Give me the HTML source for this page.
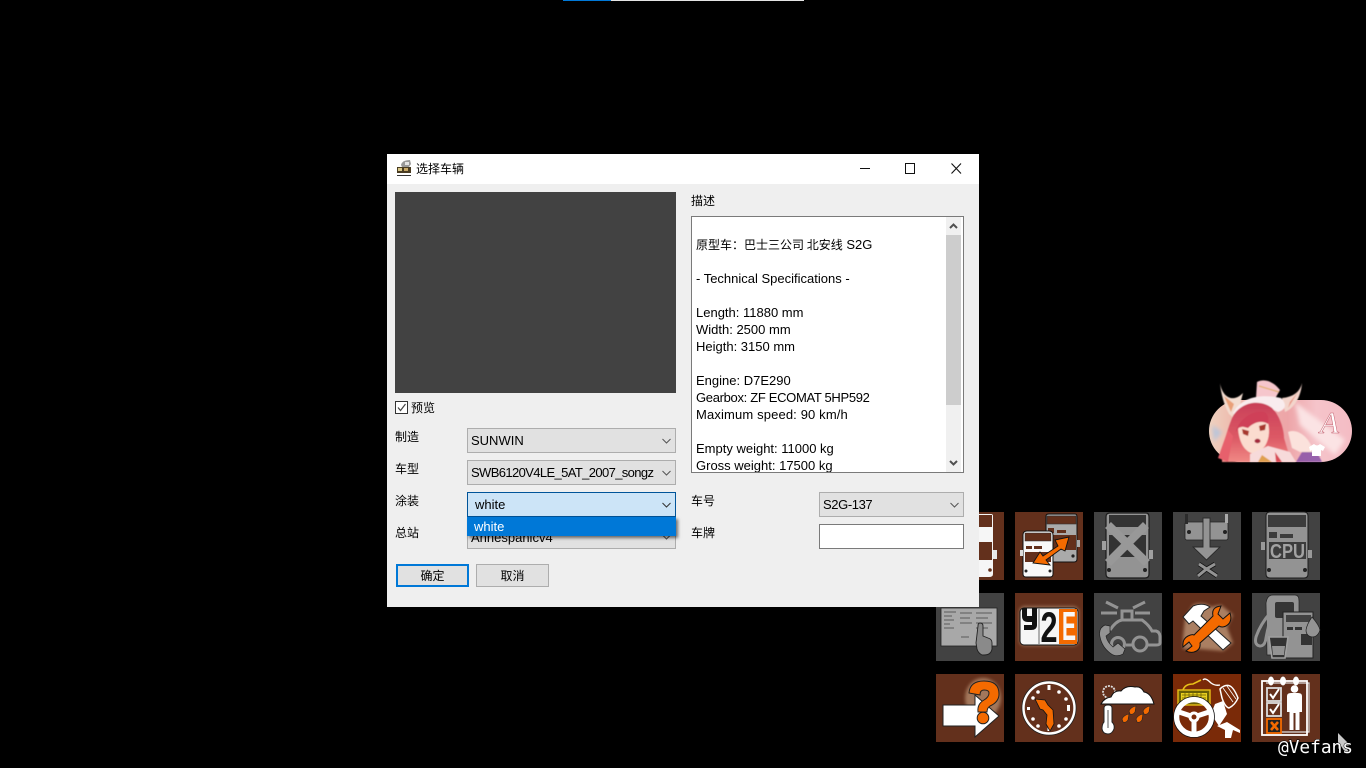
<!DOCTYPE html>
<html lang="zh"><head><meta charset="utf-8"><title>选择车辆</title>
<style>
html,body{margin:0;padding:0;background:#000;width:1366px;height:768px;overflow:hidden}
body{position:relative;font-family:"Liberation Sans","Noto Sans CJK SC",sans-serif;font-size:13px;color:#000}
.a{position:absolute;box-sizing:border-box}
.t{position:absolute;white-space:nowrap;line-height:17px;height:17px}
.c{font-family:"Noto Sans CJK SC","Liberation Sans",sans-serif;font-size:12px}
.combo{position:absolute;box-sizing:border-box;background:#e1e1e1;border:1px solid #adadad;height:25px;line-height:23px;padding-left:3px;white-space:nowrap;overflow:hidden}
.combo svg{position:absolute;right:4px;top:9px}
.btn{position:absolute;box-sizing:border-box;background:#e1e1e1;border:1px solid #adadad;text-align:center;font-family:"Noto Sans CJK SC",sans-serif;font-size:12px;height:23px;line-height:21px;width:73px;top:564px}
</style></head><body>
<div class="a" style="left:563px;top:0;width:48px;height:1px;background:#0078d7"></div>
<div class="a" style="left:611px;top:0;width:193px;height:1px;background:#e4e4e4"></div>

<svg class="a" style="left:0;top:0" width="1366" height="768" viewBox="0 0 1366 768" font-family="Liberation Sans,sans-serif">
<defs>
<linearGradient id="pill" x1="0" x2="1" y1="0" y2="0"><stop offset="0" stop-color="#efd2c0"/><stop offset=".15" stop-color="#eebdb0"/><stop offset=".55" stop-color="#eda5a8"/><stop offset=".75" stop-color="#f5c4ca"/><stop offset="1" stop-color="#f4bcc4"/></linearGradient>
<linearGradient id="hair" x1="0" x2="0" y1="0" y2="1"><stop offset="0" stop-color="#c93f58"/><stop offset=".6" stop-color="#dd5a66"/><stop offset="1" stop-color="#f08a85"/></linearGradient>
<linearGradient id="busg" x1="0" x2="1" y1="0" y2="0"><stop offset="0" stop-color="#c8c8c8"/><stop offset=".3" stop-color="#f6f6f6"/><stop offset="1" stop-color="#f6f6f6"/></linearGradient>
<filter id="b1"><feGaussianBlur stdDeviation="0.6"/></filter>
<filter id="b2"><feGaussianBlur stdDeviation="2"/></filter>
<filter id="g1" x="-30%" y="-30%" width="160%" height="160%"><feGaussianBlur stdDeviation="1.6"/></filter>
</defs>

<!-- avatar -->
<g>
<rect x="1209" y="400" width="143" height="62" rx="31" fill="url(#pill)"/>
<g filter="url(#b2)"><path d="M1295 402L1345 440L1335 455L1300 425Z" fill="#fbe3e4"/><path d="M1212 425L1222 432L1214 442Z" fill="#b9c5da"/></g>
<g filter="url(#b1)">
<path d="M1220 383C1222 396 1232 404 1243 393L1236 420L1229 414C1224 405 1221 394 1220 383Z" fill="#f3ddd0"/>
<path d="M1224 396L1234 404L1231 412Z" fill="#e9a078"/>
<path d="M1302 383C1300 392 1293 397 1282 398L1285 412C1295 408 1301 396 1302 383Z" fill="#f3d5cc"/>
<path d="M1290 402L1298 392L1288 408Z" fill="#e8907e"/>
<path d="M1257 382C1265 378 1274 382 1280 390L1276 397C1270 402 1262 402 1256 398Z" fill="#f6c6cc"/>
<path d="M1259 386L1279 392" stroke="#e2b06a" stroke-width="1.2"/>
<path d="M1233 413C1242 396 1262 394 1281 398C1287 404 1286 410 1278 412C1262 404 1246 406 1238 420Z" fill="#f9ecee"/>
<path d="M1233 416C1243 400 1262 400 1272 408C1280 416 1284 430 1284 438L1290 458L1270 462L1262 462L1236 462L1222 462C1222 450 1226 432 1233 416Z" fill="url(#hair)"/>
<path d="M1238 428C1246 426 1258 421 1267 419C1270 428 1270 438 1265 446C1261 451 1256 454 1251 453C1244 450 1239 442 1238 428Z" fill="#fbdccf"/>
<path d="M1236 432C1238 420 1252 410 1264 412C1268 414 1269 418 1268 424C1262 420 1254 422 1248 428L1240 426Z" fill="#cf3f58"/>
<path d="M1242 429L1249 431L1248 436L1243 434Z" fill="#a8382e"/><path d="M1259 426L1266 424L1265 430L1260 431Z" fill="#a8382e"/>
<ellipse cx="1257.500" cy="441" rx="3" ry="2.200" fill="#a42a3c"/>
<path d="M1250 454L1268 446L1290 452L1296 462L1250 462Z" fill="#f7dada"/>
<path d="M1262 455L1272 462H1258Z" fill="#e0a050"/><path d="M1275 452L1282 462H1276Z" fill="#d84a55"/>
<path d="M1296 462L1302 452L1316 450L1322 462Z" fill="#7f4aa5" opacity=".8"/>
<path d="M1288 432C1296 428 1310 436 1313 452L1300 452L1292 448Z" fill="#fbe2dc"/>
<path d="M1228 430L1233 436L1228 462L1218 458Z" fill="#e7606c"/>
</g>
<text x="1320" y="433" font-family="Liberation Serif,serif" font-style="italic" font-size="31" fill="#fff" stroke="#c4606e" stroke-width=".5">A</text>
<path d="M1309 447L1314 444Q1317 447 1320 444L1325 447L1323 451L1321 450V456H1312V450L1310 451Z" fill="#fff"/>
</g>

<!-- Row 1 -->
<g transform="translate(936,512)"><rect width="68" height="68" fill="#63301c"/>
<path d="M20 2H55Q57 2 57 4V62Q57 65 53 65H20Z" fill="url(#busg)"/><rect x="43" y="3" width="13" height="12" fill="#63301c"/><rect x="43" y="30" width="13" height="18" fill="#63301c"/><rect x="57" y="38" width="4" height="9" fill="#e8e8e8"/><circle cx="54" cy="58" r="1.800" fill="#63301c"/></g>

<g transform="translate(1015,512)"><rect width="68" height="68" fill="#63301c"/>
<path d="M31 4Q31 2 34 2H60Q62 2 62 5V47Q62 50 59 50H31Z" fill="#aaa" stroke="#111"/>
<rect x="32" y="4" width="29" height="8" fill="#63301c" stroke="#333" stroke-width=".6"/><rect x="33" y="16" width="6" height="5" fill="#63301c"/><rect x="42" y="18" width="9" height="3" fill="#63301c"/><rect x="32" y="23" width="29" height="15" fill="#63301c"/><circle cx="58" cy="44" r="1.600" fill="#222"/>
<rect x="62" y="28" width="3" height="7" fill="#aaa"/>
<path d="M8 23Q8 19 12 19H34Q38 19 38 23V62Q38 65 35 65H11Q8 65 8 62Z" fill="#f8f8f8" stroke="#111"/>
<rect x="10" y="21" width="26" height="8" fill="#63301c" stroke="#333" stroke-width=".5"/><rect x="11" y="34" width="6" height="3" fill="#63301c"/><rect x="19" y="34" width="8" height="3" fill="#63301c"/><rect x="10" y="40" width="26" height="10" fill="#63301c"/><rect x="5" y="38" width="3" height="6" fill="#ddd"/><circle cx="11" cy="59" r="1.500" fill="#222"/><circle cx="35" cy="59" r="1.500" fill="#222"/>
<path d="M18 51L25 40L28 44L43 34L40 28L54 25L50 39L46 37L31 48L35 53Z" fill="#f46a00" stroke="#111" stroke-width=".9"/></g>

<g transform="translate(1094,512)"><rect width="68" height="68" fill="#424242"/>
<path d="M12 5Q12 1 16 1H52Q55 1 55 5V62Q55 66 51 66H16Q12 66 12 62Z" fill="#939393" stroke="#1c1c1c" stroke-width="1.200"/>
<rect x="15" y="3" width="37" height="12" fill="#333"/><rect x="15" y="23" width="37" height="22" fill="#333"/><rect x="8" y="29" width="4" height="9" fill="#a0a0a0"/><rect x="55" y="38" width="4" height="9" fill="#a0a0a0"/><circle cx="15" cy="58" r="2" fill="#222"/><circle cx="51" cy="58" r="2" fill="#222"/>
<path d="M14 13L53 51M52 13L14 51" stroke="#989898" stroke-width="8.500"/></g>

<g transform="translate(1173,512)"><rect width="68" height="68" fill="#424242"/>
<rect x="12" y="10" width="43" height="18" rx="2" fill="#939393" stroke="#222" stroke-width=".8"/><rect x="12" y="2" width="3" height="10" fill="#2b2b2b"/><rect x="52" y="2" width="3" height="9" fill="#aaa"/><circle cx="16" cy="20" r="2" fill="#222"/><circle cx="52" cy="20" r="2" fill="#222"/>
<path d="M30 6H37V35H47L33.500 48L20 35H30Z" fill="#939393" stroke="#2a2a2a" stroke-width=".9"/>
<path d="M26 52L33.500 57L42 52M25 64L33.500 57L44 64" fill="none" stroke="#111" stroke-width="4.500"/><path d="M26 52L33.500 57L42 52M25 64L33.500 57L44 64" fill="none" stroke="#939393" stroke-width="3"/></g>

<g transform="translate(1252,512)"><rect width="68" height="68" fill="#424242"/>
<path d="M14 4Q14 0 18 0H52Q56 0 56 4V62Q56 66 52 66H18Q14 66 14 62Z" fill="#939393" stroke="#1c1c1c" stroke-width="1"/>
<rect x="16" y="3" width="38" height="12" fill="#3c3c3c"/><rect x="17" y="20" width="8" height="6" fill="#3c3c3c"/><rect x="28" y="22" width="13" height="4" fill="#3c3c3c"/><rect x="17" y="30" width="37" height="17" fill="#3c3c3c"/><rect x="9" y="30" width="4" height="8" fill="#999"/><rect x="56" y="38" width="4" height="8" fill="#999"/><circle cx="17" cy="58" r="2" fill="#222"/><circle cx="53" cy="58" r="2" fill="#222"/>
<text x="35.500" y="46" text-anchor="middle" font-size="20" font-weight="bold" fill="#a2a2a2" textLength="35" lengthAdjust="spacingAndGlyphs">CPU</text></g>

<!-- Row 2 -->
<g transform="translate(936,593)"><rect width="68" height="68" fill="#424242"/>
<rect x="5" y="15" width="56" height="38" fill="#a8a8a8" stroke="#222" stroke-width=".8"/>
<path d="M8 19H20M8 23H16M8 27H18M8 31H14M8 35H18M24 20H36M24 25H34M24 30H36M40 20H56M40 25H52M40 30H56M40 35H52M25 44H33" stroke="#5a5a5a" stroke-width="1.100"/>
<path d="M42 33Q42 30 44 30Q47 30 47 33V43L52 45Q56 46 56 50V56Q55 62 48 62H46Q42 60 41 56L40 50Z" fill="#8a8a8a" stroke="#222" stroke-width=".9"/></g>

<g transform="translate(1015,593)"><rect width="68" height="68" fill="#63301c"/>
<rect x="4" y="13" width="60" height="40" rx="6" fill="#e8c8a8" opacity=".4" filter="url(#g1)"/>
<rect x="5" y="15" width="58" height="37" rx="4" fill="#f6f6f6" stroke="#111"/>
<rect x="44" y="16" width="18" height="35" fill="#f46a00"/><path d="M24 16V51" stroke="#999" stroke-width="1.500"/>
<path d="M7 15V23Q7 29 13 29H17V32H9V37H16Q22 37 22 32V15H17V23H12V15Z" fill="#111"/>
<text x="34" y="49" text-anchor="middle" font-size="43" font-weight="bold" fill="#111" textLength="17" lengthAdjust="spacingAndGlyphs">2</text>
<text x="54" y="47" text-anchor="middle" font-size="41" font-weight="bold" fill="#f8f8f8" textLength="14" lengthAdjust="spacingAndGlyphs">E</text></g>

<g transform="translate(1094,593)"><rect width="68" height="68" fill="#424242"/>
<g fill="none" stroke="#939393" stroke-width="3">
<path d="M12 9L24 15M51 9L39 15M7 20H23M41 20H56"/>
<path d="M28 26V18H38V26M16 37Q22 28 28 27H48Q55 32 58 38H62Q66 39 66 44V50Q66 52 62 52H54M38 52H32"/>
<circle cx="46" cy="51" r="7"/><circle cx="24" cy="51" r="6.500"/></g>
<path d="M11 32Q4 35 6 44Q8 54 16 60Q22 65 29 61L31 56L24 50L19 54Q13 49 12 43L16 40L16 33Z" fill="#939393" stroke="#222" stroke-width=".7"/></g>

<g transform="translate(1173,593)"><rect width="68" height="68" fill="#63301c"/>
<path d="M12 26L20 12Q30 8 38 14L48 12L60 22L54 34L60 50L50 58L26 56L10 56L10 44Z" fill="#f0cda8" opacity=".5" filter="url(#g1)"/>
<path d="M10 24L20 13Q30 9 37 14L31 18L28 23L58 50L50 57L20 28L16 31Z" fill="#fff" stroke="#222"/>
<path d="M48 13L45 21L50 26L57 20Q60 29 53 33Q49 35 46 33L27 50Q28 57 21 59Q17 60 13 58L19 53L16 49L10 54Q9 46 15 43Q19 41 21 42L40 23Q38 14 48 13Z" fill="#f46a00" stroke="#111"/></g>

<g transform="translate(1252,593)"><rect width="68" height="68" fill="#424242"/>
<path d="M14 10Q15 2 21 2H43Q47 2 47 8V20H34V62H15Z" fill="#939393" stroke="#222" stroke-width=".7"/><rect x="23" y="9" width="19" height="16" rx="2" fill="#353535"/>
<path d="M18 20Q8 32 4 44Q2 52 8 53Q13 53 14 45L17 30" fill="none" stroke="#939393" stroke-width="3"/>
<rect x="31" y="19" width="30" height="46" fill="#939393" stroke="#222"/><rect x="34" y="22" width="25" height="7" fill="#424242"/><rect x="35" y="34" width="6" height="3" fill="#333"/><rect x="43" y="34" width="7" height="3" fill="#333"/><rect x="49" y="41" width="11" height="11" fill="#333"/>
<path d="M60 24Q67 32 68 37Q66 44 60 44Q54 43 54 37Q55 31 60 24Z" fill="#939393" stroke="#222" stroke-width=".7"/>
<path d="M17 44H36L33 65H20Z" fill="#333" stroke="#a0a0a0" stroke-width="1.600"/><path d="M20 53H33L32 62H21Z" fill="#939393"/></g>

<!-- Row 3 -->
<g transform="translate(936,674)"><rect width="68" height="68" fill="#63301c"/>
<ellipse cx="47" cy="24" rx="18" ry="20" fill="#f0cda8" opacity=".45" filter="url(#g1)"/>
<path d="M7 31H39V21L63 42L39 63V52H7Z" fill="#fff" stroke="#222"/>
<path d="M33 19Q34 7 48 7Q63 7 63 20Q63 28 54 32Q51 34 51 38H42Q41 30 48 26Q53 23 53 19Q53 16 48 16Q44 16 44 21Z" fill="#f46a00" stroke="#222"/>
<circle cx="47" cy="44" r="5.800" fill="#f46a00" stroke="#222"/></g>

<g transform="translate(1015,674)"><rect width="68" height="68" fill="#63301c"/>
<circle cx="34" cy="34" r="27" fill="none" stroke="#222"/><circle cx="34" cy="34" r="25.500" fill="none" stroke="#fff" stroke-width="2.400"/>
<g fill="#fff"><rect x="32.500" y="11" width="3" height="5"/><rect x="32.500" y="52" width="3" height="5"/><rect x="52" y="31" width="3" height="6"/><rect x="12" y="33" width="3" height="3"/><circle cx="23" cy="18" r="1.800"/><circle cx="44" cy="18" r="1.800"/><circle cx="51" cy="25" r="1.800"/><circle cx="18" cy="45" r="1.800"/><circle cx="51" cy="45" r="1.800"/><circle cx="44" cy="52" r="1.800"/><circle cx="23" cy="52" r="1.800"/><circle cx="18" cy="24" r="1.800"/></g>
<path d="M20 25L30 26L33 31L38 36L39 50L35 57L31 50L32 41L28 36L25 35Z" fill="#f46a00" stroke="#111" stroke-width=".8"/></g>

<g transform="translate(1094,674)"><rect width="68" height="68" fill="#63301c"/>
<circle cx="15" cy="18" r="6" fill="none" stroke="#ddd" stroke-width="1.800" stroke-dasharray="2 1"/>
<path d="M7 30Q10 24 17 23Q20 16 27 17Q32 11 41 13Q47 12 50 18Q57 19 60 30Z" fill="#fff" stroke="#111"/>
<path d="M10 34Q10 31 14 31Q18 31 18 34V48Q21 51 20 55Q18 60 14 60Q9 60 8 55Q8 50 10 48Z" fill="#fff" stroke="#222"/><path d="M14 36V54" stroke="#aaa" stroke-width="2"/>
<g fill="#f46a00" stroke="#222" stroke-width=".6"><path d="M35 37Q37 33 42 32L41 38Q39 41 36 40Z"/><path d="M49 37Q51 33 56 32L55 38Q53 41 50 40Z"/><path d="M28 45Q30 41 35 40L34 46Q32 49 29 48Z"/><path d="M42 45Q44 41 49 40L48 46Q46 49 43 48Z"/></g></g>

<g transform="translate(1173,674)"><rect width="68" height="68" fill="#7a2a08"/>
<path d="M10 16Q12 10 20 10L28 6" fill="none" stroke="#e8c018" stroke-width="1.600"/>
<path d="M30 6Q32 3 38 9Q42 12 47 11" fill="none" stroke="#fff" stroke-width="1.400"/>
<rect x="5" y="16" width="32" height="15" fill="#6a6006" stroke="#e8c018" stroke-width="1.400"/><rect x="8" y="19" width="26" height="8" fill="#e8d020"/>
<path d="M9 21H33M9 24H33M12 19V27M16 19V27M20 19V27M24 19V27M28 19V27" stroke="#6a5a00" stroke-width=".7"/>
<path d="M47 15Q52 10 57 12Q61 14 65 24Q62 31 56 34Q52 33 49 24Z" fill="#7a2a08" stroke="#fff" stroke-width="1.500"/>
<path d="M50 14L60 28M54 12L63 25" stroke="#fff" stroke-width=".8"/>
<path d="M42 30L50 27L54 40L46 52L38 40Z" fill="#fff"/><path d="M44 52L54 48L67 56V59L60 56L58 64H52V56Z" fill="#fff"/>
<circle cx="21" cy="43" r="17.500" fill="none" stroke="#fff" stroke-width="5.500"/><circle cx="21" cy="43" r="20.500" fill="none" stroke="#111" stroke-width=".8"/>
<path d="M6 38L21 43L36 38M21 43V60" stroke="#fff" stroke-width="5" fill="none"/><circle cx="21" cy="43" r="5.500" fill="#fff"/><circle cx="21" cy="43" r="2.500" fill="#7a2a08"/></g>

<g transform="translate(1252,674)"><rect width="68" height="68" fill="#63301c"/>
<path d="M14 9H57V58H18" fill="none" stroke="#ddd" stroke-width="1.200"/><rect x="10" y="7" width="45" height="54" fill="none" stroke="#fff" stroke-width="1.800"/>
<g fill="#fff"><ellipse cx="19" cy="7" rx="3" ry="4.500"/><ellipse cx="31" cy="7" rx="3" ry="4.500"/><ellipse cx="44" cy="7" rx="3" ry="4.500"/></g>
<rect x="15" y="14" width="14" height="13" fill="#63301c" stroke="#ddd" stroke-width="1.800"/><rect x="15" y="29" width="14" height="13" fill="#63301c" stroke="#ddd" stroke-width="1.800"/><rect x="15" y="45" width="14" height="14" fill="#222" stroke="#f46a00" stroke-width="1.800"/>
<path d="M18 20L21 24L27 15M18 35L21 39L27 30" fill="none" stroke="#fff" stroke-width="2"/><path d="M19 48L26 56M26 48L19 56" stroke="#f46a00" stroke-width="2.600"/>
<circle cx="42.500" cy="15" r="3.800" fill="#fff"/><path d="M35 22Q35 19 39 19H46Q50 19 50 22V38H47.500V56H43.500V39H41.500V56H37.500V38H35Z" fill="#fff"/></g>

<path d="M1338 733L1350 745L1345 746L1349 752L1345 752L1341 746L1338 749Z" fill="#c9c9c9"/>
<text x="1278" y="753" font-family="DejaVu Sans Mono,monospace" font-size="17.500" fill="#fff" stroke="#000" stroke-width="1" paint-order="stroke" textLength="75" lengthAdjust="spacingAndGlyphs">@Vefans</text>
</svg>

<!-- window -->
<div class="a" style="left:387px;top:154px;width:592px;height:453px;background:#efefef"></div>
<div class="a" style="left:387px;top:154px;width:592px;height:30px;background:#fff"></div>
<svg class="a" style="left:395px;top:159px" width="18" height="18" viewBox="0 0 18 18"><path d="M6 6Q7 1 15 1L16 5L14 8H7Z" fill="#999"/><path d="M10 3H14V6H10Z" fill="#e4e4e4"/><rect x="2" y="8" width="14" height="6" fill="#4a3c22"/><rect x="3" y="9" width="4" height="3" fill="#d8c888"/><rect x="9" y="9" width="4" height="3" fill="#c8a868"/><path d="M2 16.500H16" stroke="#333"/></svg>
<div class="t c" style="left:416px;top:160px">选择车辆</div>
<svg class="a" style="left:857px;top:161px" width="110" height="14" viewBox="0 0 110 14" fill="none" stroke="#111"><path d="M3 7.500H13"/><rect x="48.500" y="2.500" width="9" height="10"/><path d="M94.500 2.500L104 12.500M104 2.500L94.500 12.500" stroke-width="1.100"/></svg>

<div class="a" style="left:395px;top:192px;width:281px;height:201px;background:#424242"></div>
<div class="a" style="left:395px;top:401px;width:13px;height:13px;background:#fff;border:1px solid #333"></div>
<svg class="a" style="left:395px;top:401px" width="13" height="13"><path d="M3 6.500L5.500 9.500L10.500 3" fill="none" stroke="#444" stroke-width="1.200"/></svg>
<div class="t c" style="left:411px;top:399px">预览</div>

<div class="t c" style="left:395px;top:428px">制造</div>
<div class="t c" style="left:395px;top:460px">车型</div>
<div class="t c" style="left:395px;top:492px">涂装</div>
<div class="t c" style="left:395px;top:524px">总站</div>

<div class="combo" style="left:467px;top:428px;width:209px">SUNWIN<svg width="9" height="6"><path d="M.5 1L4.500 5L8.500 1" fill="none" stroke="#555"/></svg></div>
<div class="combo" style="left:467px;top:460px;width:209px;letter-spacing:-.62px">SWB6120V4LE_5AT_2007_songz<svg width="9" height="6"><path d="M.5 1L4.500 5L8.500 1" fill="none" stroke="#555"/></svg></div>
<div class="combo" style="left:467px;top:524px;width:209px;line-height:25px">Annespanicv4<svg width="9" height="6"><path d="M.5 1L4.500 5L8.500 1" fill="none" stroke="#555"/></svg></div>
<div class="combo" style="left:467px;top:492px;width:209px;background:#cce4f7;border-color:#005499;padding-left:7px">white<svg width="9" height="6"><path d="M.5 1L4.500 5L8.500 1" fill="none" stroke="#333"/></svg></div>
<div class="a" style="left:467px;top:517px;width:209px;height:19px;background:#0078d7;color:#fff;line-height:19px;padding-left:7px;box-shadow:2px 2px 3px rgba(0,0,0,.55)">white</div>

<div class="btn" style="left:396px;border:2px solid #0078d7;line-height:19px">确定</div>
<div class="btn" style="left:476px">取消</div>

<div class="t c" style="left:691px;top:192px">描述</div>
<div class="a" style="left:691px;top:216px;width:273px;height:257px;background:#fff;border:1px solid #7a7a7a;overflow:hidden">
<div class="t" style="left:4px;top:19px"><span class="c">原型车：巴士三公司 北安线</span> S2G</div>
<div class="t" style="left:4px;top:53px">- Technical Specifications -</div>
<div class="t" style="left:4px;top:87px">Length: 11880 mm</div>
<div class="t" style="left:4px;top:104px">Width: 2500 mm</div>
<div class="t" style="left:4px;top:121px">Heigth: 3150 mm</div>
<div class="t" style="left:4px;top:155px">Engine: D7E290</div>
<div class="t" style="left:4px;top:172px;letter-spacing:-.32px">Gearbox: ZF ECOMAT 5HP592</div>
<div class="t" style="left:4px;top:189px;letter-spacing:.14px">Maximum speed: 90 km/h</div>
<div class="t" style="left:4px;top:223px">Empty weight: 11000 kg</div>
<div class="t" style="left:4px;top:240px">Gross weight: 17500 kg</div>
<div class="a" style="left:254px;top:0;width:15px;height:255px;background:#f0f0f0"></div>
<div class="a" style="left:254px;top:18px;width:15px;height:170px;background:#cdcdcd"></div>
<svg class="a" style="left:254px;top:0" width="15" height="255"><path d="M4 11L7.500 7.500L11 11M4 244L7.500 247.500L11 244" fill="none" stroke="#505050" stroke-width="2"/></svg>
</div>

<div class="t c" style="left:691px;top:492px">车号</div>
<div class="t c" style="left:691px;top:524px">车牌</div>
<div class="combo" style="left:819px;top:492px;width:145px;letter-spacing:-.4px">S2G-137<svg width="9" height="6"><path d="M.5 1L4.500 5L8.500 1" fill="none" stroke="#555"/></svg></div>
<div class="a" style="left:819px;top:524px;width:145px;height:25px;background:#fff;border:1px solid #7a7a7a"></div>
</body></html>
